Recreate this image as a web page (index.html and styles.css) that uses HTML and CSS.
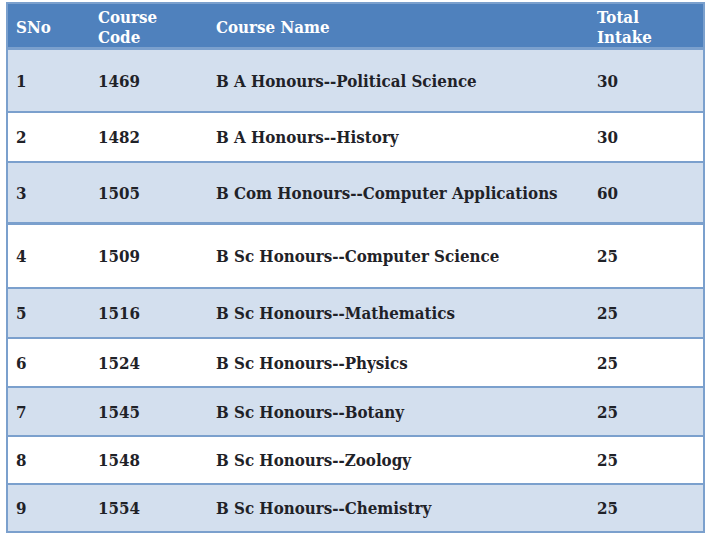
FILE: index.html
```html
<!DOCTYPE html>
<html>
<head>
<meta charset="utf-8">
<link rel="stylesheet" href="styles.css">
</head>
<body>
<table class="courses">
  <colgroup>
    <col class="c-sno"><col class="c-code"><col class="c-name"><col class="c-intake">
  </colgroup>
  <thead>
    <tr class="head">
      <th>SNo</th><th>Course<br>Code</th><th>Course Name</th><th>Total<br>Intake</th>
    </tr>
  </thead>
  <tbody>
    <tr class="r1 alt"><td>1</td><td>1469</td><td>B A Honours--Political Science</td><td>30</td></tr>
    <tr class="r2"><td>2</td><td>1482</td><td>B A Honours--History</td><td>30</td></tr>
    <tr class="r3 alt"><td>3</td><td>1505</td><td>B Com Honours--Computer Applications</td><td>60</td></tr>
    <tr class="r4"><td>4</td><td>1509</td><td>B Sc Honours--Computer Science</td><td>25</td></tr>
    <tr class="r5 alt"><td>5</td><td>1516</td><td>B Sc Honours--Mathematics</td><td>25</td></tr>
    <tr class="r6"><td>6</td><td>1524</td><td>B Sc Honours--Physics</td><td>25</td></tr>
    <tr class="r7 alt"><td>7</td><td>1545</td><td>B Sc Honours--Botany</td><td>25</td></tr>
    <tr class="r8"><td>8</td><td>1548</td><td>B Sc Honours--Zoology</td><td>25</td></tr>
    <tr class="r9 alt last"><td>9</td><td>1554</td><td>B Sc Honours--Chemistry</td><td>25</td></tr>
  </tbody>
</table>
</body>
</html>
```
FILE: styles.css
```css
html, body {
  margin: 0;
  padding: 0;
  background: #ffffff;
}
body {
  font-family: "DejaVu Serif Condensed", "DejaVu Serif", serif;
  font-stretch: condensed;
  font-weight: bold;
  font-size: 16.8px;
  color: #1f2228;
}
.courses {
  margin: 2px 0 0 6px;
  width: 699px;
  border: 2px solid #7ba0cd;
  border-collapse: separate;
  border-spacing: 0;
  table-layout: fixed;
}
.c-sno { width: 82px; }
.c-code { width: 118px; }
.c-name { width: 381px; }
.c-intake { width: 114px; }

.courses th,
.courses td {
  box-sizing: border-box;
  padding: 0 0 0 8px;
  text-align: left;
  vertical-align: middle;
  white-space: nowrap;
  border-bottom: 2px solid #7ba0cd;
}
.head th {
  background: #4f81bd;
  color: #ffffff;
  height: 46px;
  line-height: 20px;
  padding-top: 3px;
  border-bottom-width: 3px;
}
.courses td { line-height: 20px; }
.alt td { background: #d3dfee; }

.r1 td { height: 63px; }
.r2 td { height: 50px; }
.r3 td { height: 62px; border-bottom-width: 3px; }
.r4 td { height: 64px; }
.r5 td { height: 50px; }
.r6 td { height: 49px; }
.r7 td { height: 49px; }
.r8 td { height: 48px; }
.r9 td { height: 46px; border-bottom: none; }
```
